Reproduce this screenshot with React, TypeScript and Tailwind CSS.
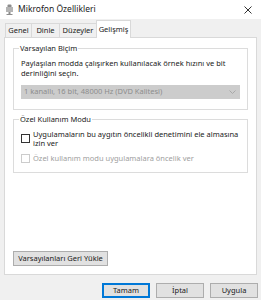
import { FC, ReactNode } from 'react'

const tabs = [
  { label: 'Genel', w: 'w-[26px]' },
  { label: 'Dinle', w: 'w-[28px]' },
  { label: 'Düzeyler', w: 'w-[37px]' },
  { label: 'Gelişmiş', w: 'w-[35px]' },
]

const MicIcon: FC = () => (
  <svg width="9" height="11" viewBox="0 0 9 11" fill="none">
    <rect x="2.5" y="0.5" width="4" height="6" rx="1" fill="#8c8c8c" />
    <rect x="1" y="3" width="7" height="5" fill="#b4b4b4" />
    <rect x="3.5" y="8" width="2" height="2" fill="#8c8c8c" />
    <rect x="1.5" y="10" width="6" height="1" fill="#8c8c8c" />
  </svg>
)

const GroupBox: FC<{ title: string; className?: string; children: ReactNode }> = ({ title, className, children }) => (
  <div className={`relative border border-[#dcdcdc] ${className ?? ''}`}>
    <span className="absolute -top-[6px] left-[5px] bg-white px-[1px] leading-[10px] text-[#1a1a1a]">{title}</span>
    {children}
  </div>
)

const Button: FC<{ label: string; primary?: boolean; className?: string }> = ({ label, primary, className }) => (
  <button
    className={`h-[15px] bg-[#e1e1e1] text-[7.5px] leading-none text-[#1a1a1a] ${primary ? 'border-2 border-[#0078d7]' : 'border border-[#adadad]'} ${className ?? ''}`}
  >
    {label}
  </button>
)

export default function App() {
  return (
    <div className="w-[261px] h-[300px] overflow-hidden bg-[#f0f0f0] flex flex-col text-[7.5px] text-[#1a1a1a]" style={{ fontFamily: '"Noto Sans", "Open Sans", sans-serif' }}>
      {/* title bar */}
      <div className="h-[19px] bg-white flex items-center pl-[5px] pr-[9px] shrink-0">
        <MicIcon />
        <span className="ml-[4px] text-[8.5px] text-[#222]">Mikrofon Özellikleri</span>
        <svg className="ml-auto" width="8" height="8" viewBox="0 0 8 8">
          <path d="M0.5 0.5L7.5 7.5M7.5 0.5L0.5 7.5" stroke="#333" strokeWidth="1" />
        </svg>
      </div>

      {/* tabs */}
      <div className="h-[18px] pl-[5px] flex items-end shrink-0">
        {tabs.map((t, i) => {
          const active = i === tabs.length - 1
          return (
            <div
              key={t.label}
              className={
                active
                  ? `${t.w} h-[18px] -mb-[1px] bg-white border border-b-0 border-[#d9d9d9] flex items-center justify-center z-10`
                  : `${t.w} h-[14px] border-t border-l border-[#d9d9d9] flex items-center justify-center`
              }
            >
              {t.label}
            </div>
          )
        })}
      </div>

      {/* panel */}
      <div className="mx-[4px] h-[238px] bg-white border border-[#d9d9d9] px-[8px] pt-[10px] flex flex-col shrink-0">
        <GroupBox title="Varsayılan Biçim" className="h-[62px] px-[7px] pt-[9px]">
          <p className="leading-[10px] text-[#222]">Paylaşılan modda çalışırken kullanılacak örnek hızını ve bit derinliğini seçin.</p>
          <div className="mt-[7px] h-[14px] bg-[#cccccc] flex items-center justify-between pl-[3px] pr-[4px] text-[#8c8c8c]">
            <span>1 kanallı, 16 bit, 48000 Hz (DVD Kalitesi)</span>
            <svg width="7" height="4" viewBox="0 0 7 4">
              <path d="M0.5 0.5L3.5 3.5L6.5 0.5" stroke="#a8a8a8" fill="none" />
            </svg>
          </div>
        </GroupBox>

        <GroupBox title="Özel Kullanım Modu" className="mt-[9px] h-[54px] px-[7px] pt-[10px]">
          <div className="flex items-start gap-[3px]">
            <div className="mt-[4px] w-[9px] h-[9px] border border-[#333] bg-white shrink-0" />
            <span className="leading-[9px]">Uygulamaların bu aygıtın öncelikli denetimini ele almasına izin ver</span>
          </div>
          <div className="mt-[5px] flex items-center gap-[3px] text-[#a0a0a0]">
            <div className="w-[9px] h-[9px] border border-[#cccccc] bg-white shrink-0" />
            <span>Özel kullanım modu uygulamalara öncelik ver</span>
          </div>
        </GroupBox>

        <div className="mt-auto mb-[8px]">
          <Button label="Varsayılanları Geri Yükle" className="w-[95px]" />
        </div>
      </div>

      {/* footer buttons */}
      <div className="flex justify-end gap-[6px] pr-[3px] pt-[8px]">
        <Button label="Tamam" primary className="w-[48px]" />
        <Button label="İptal" className="w-[48px]" />
        <Button label="Uygula" className="w-[48px]" />
      </div>
    </div>
  )
}
